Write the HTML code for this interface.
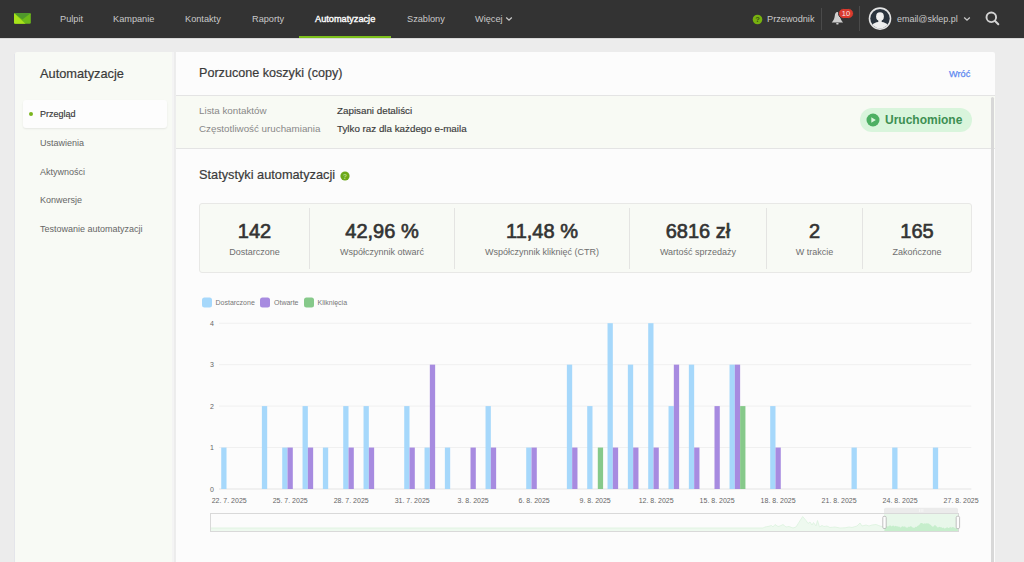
<!DOCTYPE html>
<html lang="pl">
<head>
<meta charset="utf-8">
<title>Automatyzacje</title>
<style>
*{margin:0;padding:0;box-sizing:border-box}
html,body{width:1024px;height:562px;overflow:hidden}
body{background:#ececec;font-family:"Liberation Sans",sans-serif;position:relative;color:#333}
.abs{position:absolute;white-space:nowrap}
#nav{position:absolute;left:0;top:0;width:1024px;height:38px;background:#333333;box-shadow:0 1px 0 #d9d9d9,0 2px 0 #efefef}
.ni{position:absolute;top:13px;font-size:9.2px;color:#c9c9c9;line-height:12px}
.ni.act{color:#fff;-webkit-text-stroke:0.35px #fff}
#side{position:absolute;left:15px;top:52px;width:157px;height:520px;background:#f8faf5;border-radius:2px 0 0 0}
#main{position:absolute;left:176px;top:52px;width:819px;height:520px;background:#fcfcfc;border-radius:0 2px 0 0}
#gap{position:absolute;left:172px;top:52px;width:4px;height:520px;background:linear-gradient(90deg,#f4f4f4 0,#f4f4f4 2px,#ececec 2px,#ededed 4px)}
.si{position:absolute;left:40px;font-size:9px;color:#666;line-height:10px}
.lbl{font-size:9.8px;color:#888;line-height:11px}
.val{font-size:9.8px;color:#3a3a3a;-webkit-text-stroke:0.15px #3a3a3a;line-height:11px}
.num{position:absolute;top:220px;font-size:20px;color:#333;-webkit-text-stroke:0.65px #333;text-align:center;line-height:22px}
.cap{position:absolute;top:247px;font-size:9px;color:#6f6f6f;text-align:center;line-height:11px}
.ax{font-family:"Liberation Sans",sans-serif;font-size:7px;fill:#666}
.lg{font-family:"Liberation Sans",sans-serif;font-size:7px;fill:#777}
</style>
</head>
<body>
<div id="nav">
  <svg class="abs" style="left:14.4px;top:13px" width="17" height="11" viewBox="0 0 17 11">
    <defs><clipPath id="lg"><rect x="0" y="0" width="16.8" height="10.8" rx="1.2"/></clipPath></defs>
    <g clip-path="url(#lg)"><rect x="0" y="0" width="17" height="11" fill="#6cb91a"/>
    <polygon points="0,0 17,0 8.4,6.4" fill="#4f982c"/>
    <polygon points="0,0 0,11 11.7,11" fill="#a8e21a"/></g>
  </svg>
  <div class="ni" style="left:60px">Pulpit</div>
  <div class="ni" style="left:113px">Kampanie</div>
  <div class="ni" style="left:185px">Kontakty</div>
  <div class="ni" style="left:252px">Raporty</div>
  <div class="ni act" style="left:315px">Automatyzacje</div>
  <div class="abs" style="left:299px;top:36px;width:92px;height:2px;background:#7dc01c"></div>
  <div class="ni" style="left:407px">Szablony</div>
  <div class="ni" style="left:475px">Więcej</div>
  <svg class="abs" style="left:505px;top:16px" width="8" height="6" viewBox="0 0 8 6"><path d="M1.2 1.5 L4 4.2 L6.8 1.5" stroke="#c9c9c9" stroke-width="1.3" fill="none"/></svg>

  <svg class="abs" style="left:752px;top:13.5px" width="11" height="11" viewBox="0 0 11 11"><circle cx="5.5" cy="5.5" r="4.8" fill="#77b10f"/><text x="5.5" y="8.3" text-anchor="middle" font-size="7.5" font-weight="bold" fill="#3a5212" font-family="Liberation Sans">?</text></svg>
  <div class="ni" style="left:767px">Przewodnik</div>
  <div class="abs" style="left:821px;top:8px;width:1px;height:22px;background:#4a4a4a"></div>
  <svg class="abs" style="left:830px;top:11px" width="15" height="15" viewBox="0 0 15 15"><path d="M7.4 1 C5.6 1 5 3 4.7 5.2 C4.4 7.8 3.6 9.4 1.7 11.4 L13.1 11.4 C11.2 9.4 10.4 7.8 10.1 5.2 C9.8 3 9.2 1 7.4 1Z" fill="#cfcfcf"/><rect x="6.1" y="11.9" width="2.6" height="1.7" rx="0.8" fill="#cfcfcf"/></svg>
  <div class="abs" style="left:838px;top:7.5px;width:16px;height:11px;border-radius:5.5px;background:#d93a2e;border:1px solid #333;color:#f6e6e4;font-size:7.5px;line-height:9px;text-align:center">10</div>
  <div class="abs" style="left:859px;top:6px;width:1px;height:25px;background:#4a4a4a"></div>
  <svg class="abs" style="left:868px;top:7px" width="24" height="24" viewBox="0 0 24 24">
    <defs><clipPath id="av"><circle cx="12" cy="11.6" r="9.7"/></clipPath></defs>
    <circle cx="12" cy="11.6" r="11.3" fill="#e4e4e4"/>
    <circle cx="12" cy="11.6" r="9.7" fill="#2a333d"/>
    <g clip-path="url(#av)"><ellipse cx="12" cy="9.6" rx="3.9" ry="4.3" fill="#f0f0f0"/><rect x="10.3" y="12" width="3.4" height="4" fill="#ececec"/><ellipse cx="12" cy="21.5" rx="9.5" ry="6.8" fill="#eeeeee"/></g>
  </svg>
  <div class="ni" style="left:897px;font-size:8.95px">email@sklep.pl</div>
  <svg class="abs" style="left:963px;top:16px" width="8" height="6" viewBox="0 0 8 6"><path d="M1.2 1.5 L4 4.2 L6.8 1.5" stroke="#c9c9c9" stroke-width="1.3" fill="none"/></svg>
  <svg class="abs" style="left:983px;top:9px" width="18" height="18" viewBox="0 0 18 18"><circle cx="8.3" cy="8.3" r="4.8" stroke="#d4d4d4" stroke-width="1.9" fill="none"/><path d="M11.8 11.8 L15.3 15.3" stroke="#d4d4d4" stroke-width="2" stroke-linecap="round"/></svg>
</div>

<div class="abs" style="left:14px;top:54px;width:1px;height:510px;background:#e4e5ea"></div>
<div id="side">
  <div class="abs" style="left:25px;top:15px;font-size:12.8px;color:#3a3a3a;line-height:14px;-webkit-text-stroke:0.2px #3a3a3a">Automatyzacje</div>
  <div class="abs" style="left:8px;top:48px;width:144px;height:28px;background:#fdfdfd;border-radius:3px;box-shadow:0 1px 2px rgba(0,0,0,0.08)"></div>
  <div class="abs" style="left:14.3px;top:60.2px;width:4px;height:4px;border-radius:2px;background:#7ab51d"></div>
</div>
<div class="si" style="top:109px;color:#383838;-webkit-text-stroke:0.15px #383838">Przegląd</div>
<div class="si" style="top:138px">Ustawienia</div>
<div class="si" style="top:167px">Aktywności</div>
<div class="si" style="top:195px">Konwersje</div>
<div class="si" style="top:224px">Testowanie automatyzacji</div>

<div id="gap"></div>
<div id="main">
  <div class="abs" style="left:0;top:43px;width:819px;height:1px;background:#e4e4e4"></div>
  <div class="abs" style="left:0;top:44px;width:819px;height:52px;background:#f8faf4"></div>
  <div class="abs" style="left:0;top:96px;width:819px;height:1px;background:#e4e4e4"></div>
  <div class="abs" style="left:815px;top:45px;width:3px;height:480px;background:#d8d8d8;border-radius:1.5px"></div>
</div>
<div class="abs" style="left:199px;top:66px;font-size:12.6px;color:#3a3a3a;line-height:14px;-webkit-text-stroke:0.2px #3a3a3a">Porzucone koszyki (copy)</div>
<div class="abs" style="left:949px;top:69px;font-size:9.2px;color:#5e89f0;-webkit-text-stroke:0.25px #5e89f0;line-height:10px">Wróć</div>
<div class="abs lbl" style="left:199px;top:105px">Lista kontaktów</div>
<div class="abs lbl" style="left:199px;top:123px">Częstotliwość uruchamiania</div>
<div class="abs val" style="left:337px;top:105px">Zapisani detaliści</div>
<div class="abs val" style="left:337px;top:123px">Tylko raz dla każdego e-maila</div>

<div class="abs" style="left:860px;top:108px;width:112px;height:24px;border-radius:12px;background:#d9f5dc"></div>
<svg class="abs" style="left:866px;top:113px" width="14" height="14" viewBox="0 0 14 14"><circle cx="7" cy="7" r="6.5" fill="#4caf62"/><path d="M5.3 4.2 L9.8 7 L5.3 9.8Z" fill="#d9f5dc"/></svg>
<div class="abs" style="left:885px;top:113px;font-size:12px;font-weight:bold;color:#3d8f52;line-height:14px">Uruchomione</div>

<div class="abs" style="left:199px;top:168px;font-size:12.75px;color:#3a3a3a;line-height:14px;-webkit-text-stroke:0.2px #3a3a3a">Statystyki automatyzacji</div>
<svg class="abs" style="left:340px;top:170.5px" width="10" height="10" viewBox="0 0 10 10"><circle cx="5" cy="5" r="4.6" fill="#6ca819"/><text x="5" y="7.5" text-anchor="middle" font-size="7" font-weight="bold" fill="#b9de86" font-family="Liberation Sans">?</text></svg>

<div class="abs" style="left:199px;top:203px;width:773px;height:70px;background:#f8faf5;border:1px solid #e8e8e6;border-radius:3px"></div>
<div class="abs" style="left:309px;top:208px;width:1px;height:61px;background:#e4e4e2"></div>
<div class="abs" style="left:454px;top:208px;width:1px;height:61px;background:#e4e4e2"></div>
<div class="abs" style="left:629px;top:208px;width:1px;height:61px;background:#e4e4e2"></div>
<div class="abs" style="left:766px;top:208px;width:1px;height:61px;background:#e4e4e2"></div>
<div class="abs" style="left:862px;top:208px;width:1px;height:61px;background:#e4e4e2"></div>

<div class="num" style="left:200px;width:109px">142</div>
<div class="cap" style="left:200px;width:109px">Dostarczone</div>
<div class="num" style="left:310px;width:144px">42,96 %</div>
<div class="cap" style="left:310px;width:144px">Współczynnik otwarć</div>
<div class="num" style="left:455px;width:174px">11,48 %</div>
<div class="cap" style="left:455px;width:174px">Współczynnik kliknięć (CTR)</div>
<div class="num" style="left:630px;width:136px">6816 zł</div>
<div class="cap" style="left:630px;width:136px">Wartość sprzedaży</div>
<div class="num" style="left:767px;width:95px">2</div>
<div class="cap" style="left:767px;width:95px">W trakcie</div>
<div class="num" style="left:863px;width:108px">165</div>
<div class="cap" style="left:863px;width:108px">Zakończone</div>

<svg class="abs" style="left:0;top:0" width="1024" height="562" viewBox="0 0 1024 562">
  <rect x="202" y="297.5" width="10" height="10" rx="2.5" fill="#a6d8fb"/>
  <text x="215.5" y="305" class="lg">Dostarczone</text>
  <rect x="260" y="297.5" width="10" height="10" rx="2.5" fill="#a78be0"/>
  <text x="274" y="305" class="lg">Otwarte</text>
  <rect x="304" y="297.5" width="10" height="10" rx="2.5" fill="#86c98a"/>
  <text x="317.5" y="305" class="lg">Kliknięcia</text>
<rect x="219.0" y="447.05" width="752.30" height="1" fill="#f0f0f0"/>
<rect x="219.0" y="405.60" width="752.30" height="1" fill="#f0f0f0"/>
<rect x="219.0" y="364.15" width="752.30" height="1" fill="#f0f0f0"/>
<rect x="219.0" y="322.70" width="752.30" height="1" fill="#f0f0f0"/>
<rect x="219.0" y="488.50" width="752.30" height="1" fill="#e3e3e3"/>
<rect x="221.22" y="447.55" width="5.3" height="41.45" fill="#a6d8fb"/>
<rect x="261.88" y="406.10" width="5.3" height="82.90" fill="#a6d8fb"/>
<rect x="282.21" y="447.55" width="5.3" height="41.45" fill="#a6d8fb"/>
<rect x="287.51" y="447.55" width="5.3" height="41.45" fill="#a78be0"/>
<rect x="302.55" y="406.10" width="5.3" height="82.90" fill="#a6d8fb"/>
<rect x="307.85" y="447.55" width="5.3" height="41.45" fill="#a78be0"/>
<rect x="322.88" y="447.55" width="5.3" height="41.45" fill="#a6d8fb"/>
<rect x="343.21" y="406.10" width="5.3" height="82.90" fill="#a6d8fb"/>
<rect x="348.51" y="447.55" width="5.3" height="41.45" fill="#a78be0"/>
<rect x="363.54" y="406.10" width="5.3" height="82.90" fill="#a6d8fb"/>
<rect x="368.84" y="447.55" width="5.3" height="41.45" fill="#a78be0"/>
<rect x="404.21" y="406.10" width="5.3" height="82.90" fill="#a6d8fb"/>
<rect x="409.51" y="447.55" width="5.3" height="41.45" fill="#a78be0"/>
<rect x="424.54" y="447.55" width="5.3" height="41.45" fill="#a6d8fb"/>
<rect x="429.84" y="364.65" width="5.3" height="124.35" fill="#a78be0"/>
<rect x="444.87" y="447.55" width="5.3" height="41.45" fill="#a6d8fb"/>
<rect x="470.51" y="447.55" width="5.3" height="41.45" fill="#a78be0"/>
<rect x="485.54" y="406.10" width="5.3" height="82.90" fill="#a6d8fb"/>
<rect x="490.84" y="447.55" width="5.3" height="41.45" fill="#a78be0"/>
<rect x="526.20" y="447.55" width="5.3" height="41.45" fill="#a6d8fb"/>
<rect x="531.50" y="447.55" width="5.3" height="41.45" fill="#a78be0"/>
<rect x="566.87" y="364.65" width="5.3" height="124.35" fill="#a6d8fb"/>
<rect x="572.17" y="447.55" width="5.3" height="41.45" fill="#a78be0"/>
<rect x="587.20" y="406.10" width="5.3" height="82.90" fill="#a6d8fb"/>
<rect x="597.80" y="447.55" width="5.3" height="41.45" fill="#86c98a"/>
<rect x="607.53" y="323.20" width="5.3" height="165.80" fill="#a6d8fb"/>
<rect x="612.83" y="447.55" width="5.3" height="41.45" fill="#a78be0"/>
<rect x="627.86" y="364.65" width="5.3" height="124.35" fill="#a6d8fb"/>
<rect x="633.16" y="447.55" width="5.3" height="41.45" fill="#a78be0"/>
<rect x="648.20" y="323.20" width="5.3" height="165.80" fill="#a6d8fb"/>
<rect x="653.50" y="447.55" width="5.3" height="41.45" fill="#a78be0"/>
<rect x="668.53" y="406.10" width="5.3" height="82.90" fill="#a6d8fb"/>
<rect x="673.83" y="364.65" width="5.3" height="124.35" fill="#a78be0"/>
<rect x="688.86" y="364.65" width="5.3" height="124.35" fill="#a6d8fb"/>
<rect x="694.16" y="447.55" width="5.3" height="41.45" fill="#a78be0"/>
<rect x="714.49" y="406.10" width="5.3" height="82.90" fill="#a78be0"/>
<rect x="729.53" y="364.65" width="5.3" height="124.35" fill="#a6d8fb"/>
<rect x="734.83" y="364.65" width="5.3" height="124.35" fill="#a78be0"/>
<rect x="740.13" y="406.10" width="5.3" height="82.90" fill="#86c98a"/>
<rect x="770.19" y="406.10" width="5.3" height="82.90" fill="#a6d8fb"/>
<rect x="775.49" y="447.55" width="5.3" height="41.45" fill="#a78be0"/>
<rect x="851.52" y="447.55" width="5.3" height="41.45" fill="#a6d8fb"/>
<rect x="892.19" y="447.55" width="5.3" height="41.45" fill="#a6d8fb"/>
<rect x="932.85" y="447.55" width="5.3" height="41.45" fill="#a6d8fb"/>
<text x="212" y="491.50" text-anchor="middle" class="ax">0</text>
<text x="212" y="450.05" text-anchor="middle" class="ax">1</text>
<text x="212" y="408.60" text-anchor="middle" class="ax">2</text>
<text x="212" y="367.15" text-anchor="middle" class="ax">3</text>
<text x="212" y="325.70" text-anchor="middle" class="ax">4</text>
<text x="229.17" y="502.5" text-anchor="middle" class="ax">22. 7. 2025</text>
<text x="290.16" y="502.5" text-anchor="middle" class="ax">25. 7. 2025</text>
<text x="351.16" y="502.5" text-anchor="middle" class="ax">28. 7. 2025</text>
<text x="412.16" y="502.5" text-anchor="middle" class="ax">31. 7. 2025</text>
<text x="473.16" y="502.5" text-anchor="middle" class="ax">3. 8. 2025</text>
<text x="534.15" y="502.5" text-anchor="middle" class="ax">6. 8. 2025</text>
<text x="595.15" y="502.5" text-anchor="middle" class="ax">9. 8. 2025</text>
<text x="656.15" y="502.5" text-anchor="middle" class="ax">12. 8. 2025</text>
<text x="717.14" y="502.5" text-anchor="middle" class="ax">15. 8. 2025</text>
<text x="778.14" y="502.5" text-anchor="middle" class="ax">18. 8. 2025</text>
<text x="839.14" y="502.5" text-anchor="middle" class="ax">21. 8. 2025</text>
<text x="900.14" y="502.5" text-anchor="middle" class="ax">24. 8. 2025</text>
<text x="961.13" y="502.5" text-anchor="middle" class="ax">27. 8. 2025</text>
  <!-- data zoom -->
  <polygon points="211,531.5 211,528 763,528 765,527 768,526.5 771.5,525.5 773,527 775,524.5 778,526.5 780,526 783,524.5 786,527 789,526.5 793,528 796,527 802.7,516.5 806,520.5 808,523.5 810,522 812,525 813.5,522.5 816,526 817.5,520.5 819.5,527 822,525.5 824,526.5 827,526 830,527.5 835,527 840,528 845,527.8 849,527 852,527.5 857,526 860,523 862,526 866,525 869,526 872,525 876,524.5 880,526 884,527 884,531.5" fill="#eef9ef"/>
  <polyline points="211,528 763,528 765,527 768,526.5 771.5,525.5 773,527 775,524.5 778,526.5 780,526 783,524.5 786,527 789,526.5 793,528 796,527 802.7,516.5 806,520.5 808,523.5 810,522 812,525 813.5,522.5 816,526 817.5,520.5 819.5,527 822,525.5 824,526.5 827,526 830,527.5 835,527 840,528 845,527.8 849,527 852,527.5 857,526 860,523 862,526 866,525 869,526 872,525 876,524.5 880,526 884,527" fill="none" stroke="#dcf2de" stroke-width="0.8"/>
  <rect x="884" y="513.5" width="74" height="18" fill="#e8f7ea"/>
  <polygon points="884.4,531.5 884.8,526.28 885.76,526.55 886.73,526.21 887.69,526.39 888.65,526.34 889.61,525.56 890.57,525.44 891.53,526.44 892.49,525.63 893.45,525.52 894.41,526.42 895.37,525.67 896.33,526.23 897.29,526.19 898.25,526.82 899.22,526.62 900.18,527.49 901.14,527.22 902.1,526.2 903.06,526.49 904.02,526.72 904.98,526.25 905.94,527.46 906.9,527.56 907.86,527.51 908.82,526.6 909.78,526.94 910.74,526.09 911.71,526.83 912.67,527.47 913.63,527.69 914.59,527.72 915.55,526.8 916.51,527.08 917.47,525.91 918.43,525.57 919.39,524.65 920.35,523.36 921.31,523.12 922.27,522.94 923.23,523.93 924.2,523.35 925.16,523.69 926.12,523.29 927.08,523.49 928.04,523.27 929.0,523.7 929.96,524.48 930.92,524.96 931.88,526.17 932.84,526.85 933.8,526.14 934.76,525.02 935.72,525.44 936.69,526.53 937.65,527.39 938.61,527.18 939.57,526.76 940.53,527.23 941.49,527.35 942.45,528.09 943.41,527.57 944.37,528.48 945.33,528.27 946.29,527.75 947.25,527.18 948.21,527.9 949.18,527.9 950.14,526.79 951.1,527.75 952.06,527.3 953.02,527.09 953.98,527.39 954.94,528.12 955.9,528.3 956.86,527.23 957.82,527.96 958,531.5" fill="#c6eecc"/>
  <rect x="210.5" y="513.5" width="748" height="18" fill="none" stroke="#d9d9d9" stroke-width="1"/>
  <path d="M884 513 L884 509.5 Q884 507.7 886 507.7 L956 507.7 Q958 507.7 958 509.5 L958 513Z" fill="#ebebeb"/>
  <rect x="919" y="509" width="0.6" height="3" fill="#fafafa"/><rect x="920.8" y="509" width="0.6" height="3" fill="#fafafa"/><rect x="922.6" y="509" width="0.6" height="3" fill="#fafafa"/>
  <rect x="882.8" y="516.3" width="3.4" height="12.2" rx="1.2" fill="#fdfdfd" stroke="#a9a9a9" stroke-width="0.7"/>
  <rect x="956.2" y="516.3" width="3.4" height="12.2" rx="1.2" fill="#fdfdfd" stroke="#a9a9a9" stroke-width="0.7"/>
</svg>
</body>
</html>
